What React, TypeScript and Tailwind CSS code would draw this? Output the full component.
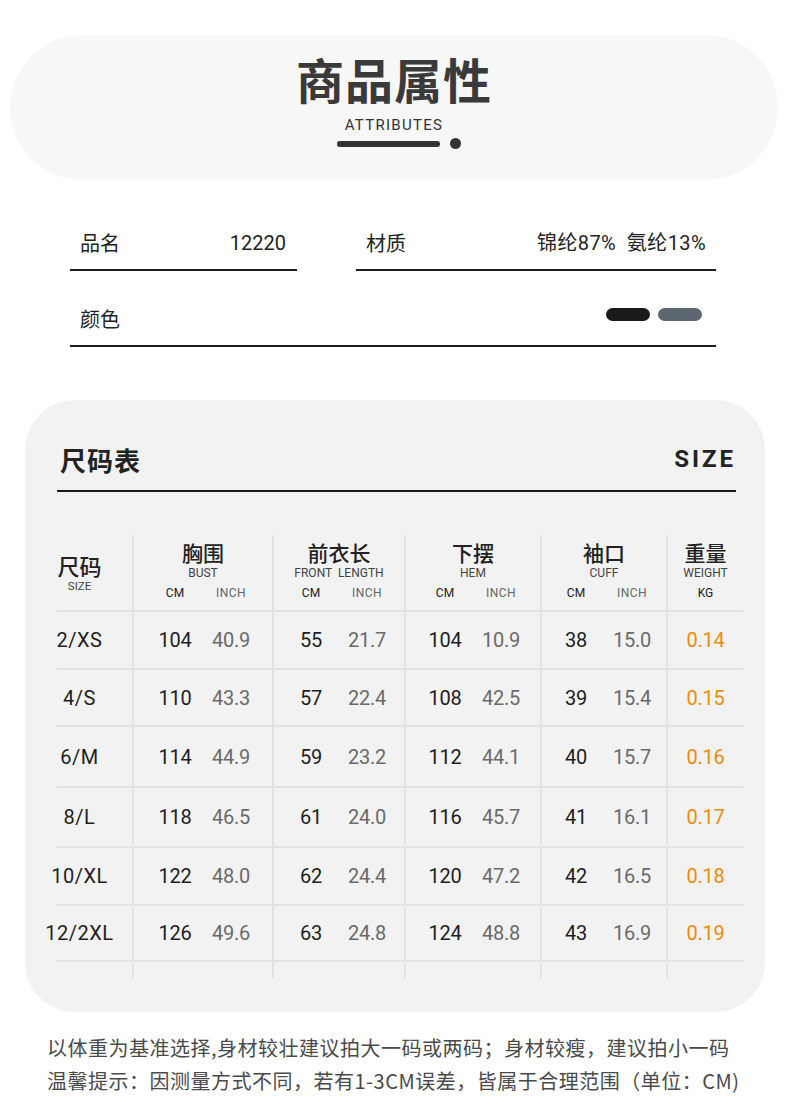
import React from "react";

const CJK = "font-['Noto_Sans_CJK_SC','Noto_Sans',sans-serif]";
const LAT = "font-[Roboto,'Noto_Sans_CJK_SC',sans-serif]";

const COLS = "grid grid-cols-[75px_140px_132px_136px_126px_77px]";

interface SizeRow {
  size: string;
  h: string;
  vals: [string, string][];
  kg: string;
}

const groups = [
  { zh: "胸围", en: "BUST" },
  { zh: "前衣长", en: "FRONT  LENGTH" },
  { zh: "下摆", en: "HEM" },
  { zh: "袖口", en: "CUFF" },
];

// row heights include the 2px bottom rule
const rows: SizeRow[] = [
  { size: "2/XS", h: "h-[58px]", vals: [["104", "40.9"], ["55", "21.7"], ["104", "10.9"], ["38", "15.0"]], kg: "0.14" },
  { size: "4/S", h: "h-[57px]", vals: [["110", "43.3"], ["57", "22.4"], ["108", "42.5"], ["39", "15.4"]], kg: "0.15" },
  { size: "6/M", h: "h-[61px]", vals: [["114", "44.9"], ["59", "23.2"], ["112", "44.1"], ["40", "15.7"]], kg: "0.16" },
  { size: "8/L", h: "h-[60px]", vals: [["118", "46.5"], ["61", "24.0"], ["116", "45.7"], ["41", "16.1"]], kg: "0.17" },
  { size: "10/XL", h: "h-[58px]", vals: [["122", "48.0"], ["62", "24.4"], ["120", "47.2"], ["42", "16.5"]], kg: "0.18" },
  { size: "12/2XL", h: "h-[56px]", vals: [["126", "49.6"], ["63", "24.8"], ["124", "48.8"], ["43", "16.9"]], kg: "0.19" },
];

function AttrRow({ label, children, className }: { label: string; children: React.ReactNode; className: string }) {
  return (
    <div className={`flex items-center justify-between h-[54px] border-b-2 border-[#1e1e1e] px-[10px] ${className}`}>
      <span className={`${CJK} text-[20px] text-[#222]`}>{label}</span>
      {children}
    </div>
  );
}

function SizeTable() {
  return (
    <div className="ml-[32px] mt-[43px] w-[686px]">
      {/* header */}
      <div className={`${COLS} h-[77px] border-b-2 border-[#e2e2e2]`}>
        <div className="flex flex-col items-center pt-[18px] pr-[30px]">
          <span className={`${CJK} text-[22px] leading-[24px] font-medium text-[#222]`}>尺码</span>
          <span className={`${LAT} text-[11.5px] leading-[14px] text-[#444] mt-[2px]`}>SIZE</span>
        </div>
        {groups.map((g) => (
          <div key={g.zh} className="flex flex-col items-center border-l-2 border-[#e2e2e2] pt-[6px]">
            <span className={`${CJK} text-[21px] leading-[22px] font-medium text-[#222]`}>{g.zh}</span>
            <span className={`${LAT} mt-[3px] text-[12px] leading-[14px] text-[#444] whitespace-pre`}>{g.en}</span>
            <div className={`${LAT} flex mt-[6px] text-[12px] leading-[14px]`}>
              <span className="w-[56px] text-center text-[#222]">CM</span>
              <span className="w-[56px] text-center text-[#666] tracking-[0.5px]">INCH</span>
            </div>
          </div>
        ))}
        <div className="flex flex-col items-center border-l-2 border-[#e2e2e2] pt-[6px]">
          <span className={`${CJK} text-[21px] leading-[22px] font-medium text-[#222]`}>重量</span>
          <span className={`${LAT} mt-[3px] text-[12px] leading-[14px] text-[#444]`}>WEIGHT</span>
          <span className={`${LAT} mt-[6px] text-[12px] leading-[14px] text-[#222]`}>KG</span>
        </div>
      </div>

      {rows.map((r) => (
        <div key={r.size} className={`${COLS} ${r.h} border-b-2 border-[#e2e2e2] ${LAT} text-[20px] tracking-[-0.3px]`}>
          <div className="flex items-center justify-center pr-[30px] text-[#1e1e1e] tracking-[0.5px]">{r.size}</div>
          {r.vals.map(([cm, inch], i) => (
            <div key={i} className="flex items-center justify-center border-l-2 border-[#e2e2e2]">
              <span className="w-[56px] text-center text-[#1e1e1e]">{cm}</span>
              <span className="w-[56px] text-center text-[#6a6a6a]">{inch}</span>
            </div>
          ))}
          <div className="flex items-center justify-center border-l-2 border-[#e2e2e2] text-[#ef8a0c]">{r.kg}</div>
        </div>
      ))}

      <div className={`${COLS} h-[16px]`}>
        <div />
        <div className="border-l-2 border-[#e2e2e2]" />
        <div className="border-l-2 border-[#e2e2e2]" />
        <div className="border-l-2 border-[#e2e2e2]" />
        <div className="border-l-2 border-[#e2e2e2]" />
        <div className="border-l-2 border-[#e2e2e2]" />
      </div>
    </div>
  );
}

export default function App() {
  return (
    <div className={`w-[790px] min-h-[1117px] bg-white overflow-hidden ${CJK}`}>
      {/* title pill */}
      <div className="ml-[10px] mr-[12px] mt-[35px] h-[145px] rounded-full bg-[#f7f7f7] flex flex-col items-center pt-[19px]">
        <h1 className={`${CJK} text-[48px] leading-[48px] font-bold text-[#3a3a3a] tracking-[1px]`}>商品属性</h1>
        <span className={`${LAT} mt-[14px] text-[15px] leading-[18px] tracking-[1.3px] text-[#333]`}>ATTRIBUTES</span>
        <div className="flex items-center mt-[4px] pl-[10px]">
          <div className="w-[103px] h-[6px] rounded-full bg-[#333]" />
          <div className="w-[11px] h-[11px] rounded-full bg-[#333] ml-[10px]" />
        </div>
      </div>

      {/* attributes */}
      <div className="mx-[70px] mt-[37px] w-[646px]">
        <div className="flex justify-between">
          <AttrRow label="品名" className="w-[227px]">
            <span className={`${LAT} text-[20px] text-[#222] mr-[1px]`}>12220</span>
          </AttrRow>
          <AttrRow label="材质" className="w-[360px]">
            <span className={`${LAT} text-[20px] text-[#222] tracking-[0.4px]`}>锦纶87%&nbsp;&nbsp;氨纶13%</span>
          </AttrRow>
        </div>
        <AttrRow label="颜色" className="mt-[22px]">
          <div className="flex items-center gap-[8px] mr-[4px] mb-[9px]">
            <div className="w-[44px] h-[13px] rounded-full bg-[#1a1a1a]" />
            <div className="w-[44px] h-[13px] rounded-full bg-[#5d6772]" />
          </div>
        </AttrRow>
      </div>

      {/* size chart */}
      <div className="mx-[25px] mt-[53px] h-[612px] rounded-[50px] bg-[#f2f2f2] pt-[36px]">
        <div className="ml-[32px] mr-[29px] h-[56px] pb-[8px] flex items-center justify-between border-b-2 border-[#1a1a1a] px-[3px]">
          <span className={`${CJK} text-[26px] font-bold text-[#222] tracking-[1px]`}>尺码表</span>
          <span className={`${LAT} text-[24px] font-bold text-[#222] tracking-[3px] -mr-[3px]`}>SIZE</span>
        </div>
        <SizeTable />
      </div>

      {/* notes */}
      <div className={`${CJK} ml-[47px] mt-[19px] text-[20px] leading-[33px] text-[#4a4a4a] whitespace-nowrap tracking-[0.5px]`}>
        <p>以体重为基准选择,身材较壮建议拍大一码或两码；身材较瘦，建议拍小一码</p>
        <p>温馨提示：因测量方式不同，若有1-3CM误差，皆属于合理范围（单位：CM)</p>
      </div>
    </div>
  );
}
